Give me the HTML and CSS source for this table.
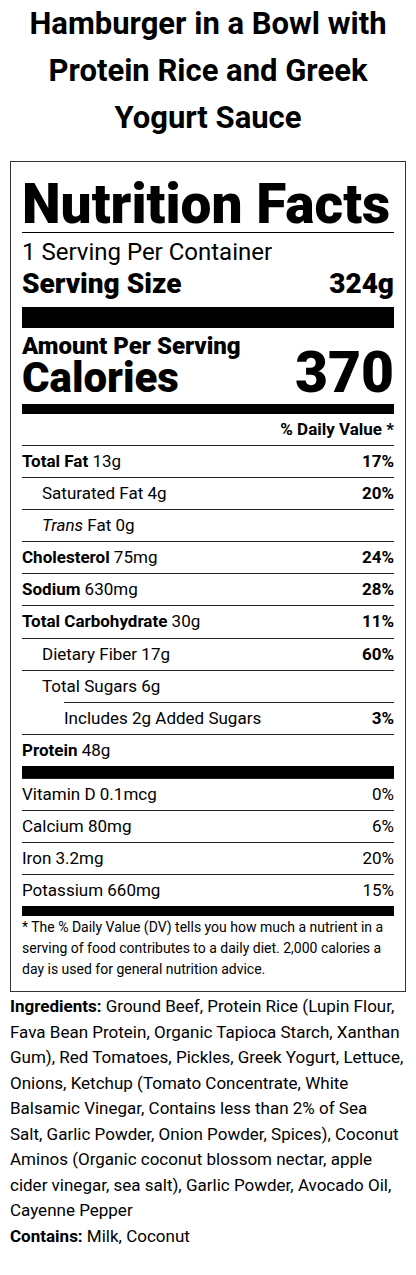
FILE: index.html
```html
<!DOCTYPE html>
<html>
<head>

    <meta charset="UTF-8">
    <title>Hamburger in a Bowl with Protein Rice and Greek Yogurt Sauce</title>

    <meta name="viewport" content="width=device-width, initial-scale=1">

    <link rel="stylesheet" href="styles.css">

</head>
<body>

    <h1 class="recipe-title">Hamburger in a Bowl with Protein Rice and Greek Yogurt Sauce</h1>

    <section class="facts">

        <h2 class="facts-title">Nutrition Facts</h2>

        <div class="servings">
            <p class="servings-count">1 Serving Per Container</p>
            <p class="servings-size">
                <span>Serving Size</span>
                <span>324g</span>
            </p>
        </div>

        <div class="calories">
            <p class="calories-amount">Amount Per Serving</p>
            <p class="calories-row">
                <span class="calories-label">Calories</span>
                <span class="calories-value">370</span>
            </p>
        </div>

        <p class="dv-head">% Daily Value *</p>

        <ul class="nutrients">
            <li><span><b>Total Fat</b> 13g</span><b>17%</b></li>
            <li class="sub"><span>Saturated Fat 4g</span><b>20%</b></li>
            <li class="sub"><span><i>Trans</i> Fat 0g</span></li>
            <li><span><b>Cholesterol</b> 75mg</span><b>24%</b></li>
            <li><span><b>Sodium</b> 630mg</span><b>28%</b></li>
            <li><span><b>Total Carbohydrate</b> 30g</span><b>11%</b></li>
            <li class="sub"><span>Dietary Fiber 17g</span><b>60%</b></li>
            <li class="sub"><span>Total Sugars 6g</span></li>
            <li class="sub-2"><span>Includes 2g Added Sugars</span><b>3%</b></li>
            <li class="last"><span><b>Protein</b> 48g</span></li>
        </ul>

        <ul class="nutrients vitamins">
            <li><span>Vitamin D 0.1mcg</span><span>0%</span></li>
            <li><span>Calcium 80mg</span><span>6%</span></li>
            <li><span>Iron 3.2mg</span><span>20%</span></li>
            <li class="last"><span>Potassium 660mg</span><span>15%</span></li>
        </ul>

        <p class="footnote">* The % Daily Value (DV) tells you how much a nutrient in a serving of food contributes to a daily diet. 2,000 calories a day is used for general nutrition advice.</p>

    </section>

    <p class="ingredients"><b>Ingredients:</b> Ground Beef, Protein Rice (Lupin Flour, Fava Bean Protein, Organic Tapioca Starch, Xanthan Gum), Red Tomatoes, Pickles, Greek Yogurt, Lettuce, Onions, Ketchup (Tomato Concentrate, White Balsamic Vinegar, Contains less than 2% of Sea Salt, Garlic Powder, Onion Powder, Spices), Coconut Aminos (Organic coconut blossom nectar, apple cider vinegar, sea salt), Garlic Powder, Avocado Oil, Cayenne Pepper</p>
    <p class="contains"><b>Contains:</b> Milk, Coconut</p>

</body>
</html>
```

FILE: styles.css
```css
html {
    font-family: Roboto, "Liberation Sans", Arial, sans-serif;
    box-sizing: border-box;
}

*,
*:before,
*:after {
    box-sizing: inherit;
}

body {
    margin: 0;
    padding: 0 10px;
    color: #000;
    background: #fff;
}

p,
ul {
    margin: 0;
    padding: 0;
}

.recipe-title {
    margin: 0 0 20px;
    font-size: 31px;
    line-height: 47px;
    font-weight: 700;
    text-align: center;
}

.facts {
    border: 1px solid #333;
    padding: 14px 11px 11px;
}

.facts-title {
    margin: 0;
    font-size: 55px;
    line-height: 56px;
    font-weight: 900;
    white-space: nowrap;
    border-bottom: 1px solid #000;
}

.servings {
    border-bottom: 21px solid #000;
    padding-bottom: 7px;
}

.servings-count {
    margin-top: 5px;
    font-size: 24px;
    line-height: 28px;
}

.servings-size {
    display: flex;
    justify-content: space-between;
    margin-top: 2px;
    font-size: 28px;
    line-height: 32px;
    font-weight: 900;
}

.calories {
    border-bottom: 10px solid #000;
    padding: 5px 0 8px;
}

.calories-amount {
    font-size: 24px;
    line-height: 26px;
    font-weight: 900;
}

.calories-row {
    display: flex;
    justify-content: space-between;
    align-items: baseline;
    font-weight: 900;
}

.calories-label {
    font-size: 42px;
    line-height: 37px;
}

.calories-value {
    font-size: 57px;
    line-height: 24px;
}

.dv-head {
    font-size: 17px;
    line-height: 31px;
    font-weight: 700;
    text-align: right;
}

.nutrients {
    list-style: none;
    font-size: 17px;
    line-height: 31.1px;
}

.nutrients li {
    display: flex;
    justify-content: space-between;
    border-top: 1px solid #222;
}

.nutrients li.last {
    border-bottom: 12px solid #000;
}

.vitamins li.last {
    border-bottom-width: 10px;
}

.nutrients .sub span {
    padding-left: 20px;
}

.nutrients .sub-2 {
    margin-left: 42px;
}

.footnote {
    padding-top: 1px;
    font-size: 14px;
    line-height: 21px;
}

.ingredients,
.contains {
    font-size: 17px;
    line-height: 25.5px;
}

.ingredients {
    margin-top: 2px;
    padding-right: 2.5px;
}
```
